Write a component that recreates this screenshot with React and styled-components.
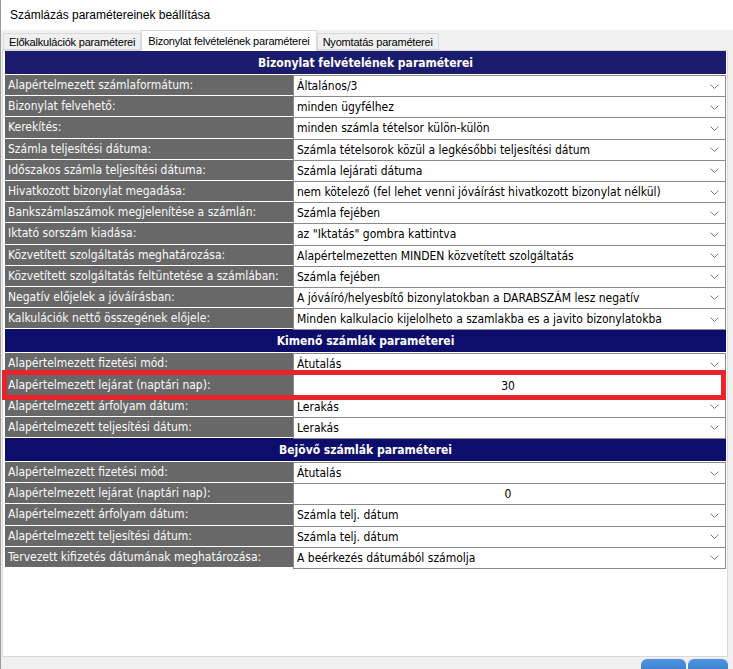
import React from 'react';
import styled, { createGlobalStyle } from 'styled-components';

const GlobalStyle = createGlobalStyle`
  html, body {
    margin: 0;
    padding: 0;
    background: #fff;
  }
  body {
    font-family: "Liberation Sans", Arial, sans-serif;
  }
`;

const Window = styled.div`
  width: 733px;
  height: 669px;
  box-sizing: border-box;
  display: flex;
  flex-direction: column;
  border-left: 1px solid #9a9a9a;
  background: #f0f0f0;
  overflow: hidden;
`;

const TitleBar = styled.div`
  height: 30px;
  flex: none;
  display: flex;
  align-items: center;
  padding-left: 9px;
  background: #fff;
  font-family: "Liberation Sans", Arial, sans-serif;
  font-size: 12px;
  color: #000;
`;

const Body = styled.div`
  flex: 1;
  display: flex;
  flex-direction: column;
  padding: 0 5px 0 1px;
`;

const TabStrip = styled.div`
  height: 20px;
  flex: none;
  display: flex;
  align-items: flex-end;
  padding-left: 1px;
`;

const Tab = styled.div`
  box-sizing: border-box;
  height: ${(p) => (p.$active ? '21px' : '17px')};
  margin-bottom: ${(p) => (p.$active ? '-1px' : '0')};
  padding: ${(p) => (p.$active ? '0 6px' : '0 5px')};
  display: flex;
  align-items: center;
  border: 1px solid #d9d9d9;
  border-bottom: ${(p) => (p.$active ? 'none' : '1px solid #d9d9d9')};
  background: ${(p) => (p.$active ? '#fff' : '#f0f0f0')};
  position: relative;
  z-index: ${(p) => (p.$active ? 2 : 1)};
  font-family: "Liberation Sans", Arial, sans-serif;
  font-size: 11px;
  letter-spacing: -0.2px;
  color: #000;
  white-space: nowrap;
`;

const Panel = styled.div`
  height: 607px;
  flex: none;
  box-sizing: border-box;
  background: #fff;
  border: 1px solid #d9d9d9;
  padding: 0 1px 0 2px;
`;

const Table = styled.div`
  display: flex;
  flex-direction: column;
  font-family: "DejaVu Sans Condensed", "DejaVu Sans", sans-serif;
  font-stretch: condensed;
  font-size: 12px;
`;

const Header = styled.div`
  height: 23px;
  margin-bottom: 1px;
  display: flex;
  align-items: center;
  justify-content: center;
  background: ${(p) => p.$tone};
  color: #fff;
  font-weight: bold;
`;

const Row = styled.div`
  position: relative;
  height: 21.2px;
  display: grid;
  grid-template-columns: 288px 1fr;
`;

const Label = styled.div`
  box-sizing: border-box;
  height: 100%;
  padding-left: 3px;
  display: flex;
  align-items: center;
  background: #686868;
  color: #fafafa;
  border-bottom: 1px solid #fff;
  white-space: nowrap;
`;

const Value = styled.div`
  box-sizing: border-box;
  height: calc(100% + 1px);
  padding: 0 6px 0 3px;
  display: flex;
  align-items: center;
  justify-content: ${(p) => (p.$center ? 'center' : 'space-between')};
  background: #fff;
  border: 1px solid #8a8a8a;
  color: #000;
  white-space: nowrap;
  position: relative;
  z-index: ${(p) => (p.$first ? 0 : 1)};
`;

const Chevron = styled.svg`
  flex: none;
  width: 9px;
  height: 5px;
`;

const Highlight = styled.div`
  position: absolute;
  left: -3px;
  right: 0;
  top: -4px;
  bottom: -4px;
  border: 5px solid #e8232b;
  pointer-events: none;
  z-index: 5;
`;

const Footer = styled.div`
  flex: 1;
  display: flex;
  justify-content: flex-end;
  align-items: flex-start;
  gap: 2px;
  padding-top: 2px;
`;

const FooterButton = styled.div`
  width: ${(p) => p.$w}px;
  height: 22px;
  border-radius: 6px;
  background: linear-gradient(#4d94df, #2f72c4);
`;

const sections = [
  {
    title: 'Bizonylat felvételének paraméterei',
    tone: '#1c1c6e',
    rows: [
      ['Alapértelmezett számlaformátum:', 'Általános/3'],
      ['Bizonylat felvehető:', 'minden ügyfélhez'],
      ['Kerekítés:', 'minden számla tételsor külön-külön'],
      ['Számla teljesítési dátuma:', 'Számla tételsorok közül a legkésőbbi teljesítési dátum'],
      ['Időszakos számla teljesítési dátuma:', 'Számla lejárati dátuma'],
      ['Hivatkozott bizonylat megadása:', 'nem kötelező (fel lehet venni jóváírást hivatkozott bizonylat nélkül)'],
      ['Bankszámlaszámok megjelenítése a számlán:', 'Számla fejében'],
      ['Iktató sorszám kiadása:', 'az "Iktatás" gombra kattintva'],
      ['Közvetített szolgáltatás meghatározása:', 'Alapértelmezetten MINDEN közvetített szolgáltatás'],
      ['Közvetített szolgáltatás feltüntetése a számlában:', 'Számla fejében'],
      ['Negatív előjelek a jóváírásban:', 'A jóváíró/helyesbítő bizonylatokban a DARABSZÁM lesz negatív'],
      ['Kalkulációk nettő összegének előjele:', 'Minden kalkulacio kijelolheto a szamlakba es a javito bizonylatokba'],
    ],
  },
  {
    title: 'Kimenő számlák paraméterei',
    tone: '#0d0d6b',
    rows: [
      ['Alapértelmezett fizetési mód:', 'Átutalás'],
      ['Alapértelmezett lejárat (naptári nap):', '30', 'number', true],
      ['Alapértelmezett árfolyam dátum:', 'Lerakás'],
      ['Alapértelmezett teljesítési dátum:', 'Lerakás'],
    ],
  },
  {
    title: 'Bejövő számlák paraméterei',
    tone: '#0d0d6b',
    rows: [
      ['Alapértelmezett fizetési mód:', 'Átutalás'],
      ['Alapértelmezett lejárat (naptári nap):', '0', 'number'],
      ['Alapértelmezett árfolyam dátum:', 'Számla telj. dátum'],
      ['Alapértelmezett teljesítési dátum:', 'Számla telj. dátum'],
      ['Tervezett kifizetés dátumának meghatározása:', 'A beérkezés dátumából számolja'],
    ],
  },
];

function DropArrow() {
  return (
    <Chevron viewBox="0 0 9 5">
      <polyline points="0.5,0.5 4.5,4.5 8.5,0.5" fill="none" stroke="#7a7a7a" strokeWidth="1" />
    </Chevron>
  );
}

export default function App() {
  return (
    <>
      <GlobalStyle />
      <Window>
        <TitleBar>Számlázás paramétereinek beállítása</TitleBar>
        <Body>
          <TabStrip>
            <Tab>Előkalkulációk paraméterei</Tab>
            <Tab $active>Bizonylat felvételének paraméterei</Tab>
            <Tab>Nyomtatás paraméterei</Tab>
          </TabStrip>
          <Panel>
            <Table>
              {sections.map((s) => (
                <React.Fragment key={s.title}>
                  <Header $tone={s.tone}>{s.title}</Header>
                  {s.rows.map(([label, value, kind, marked], i) => (
                    <Row key={label}>
                      <Label>{label}</Label>
                      <Value $center={kind === 'number'} $first={i === 0}>
                        <span>{value}</span>
                        {kind !== 'number' && <DropArrow />}
                      </Value>
                      {marked && <Highlight />}
                    </Row>
                  ))}
                </React.Fragment>
              ))}
            </Table>
          </Panel>
          <Footer>
            <FooterButton $w={45} />
            <FooterButton $w={40} />
          </Footer>
        </Body>
      </Window>
    </>
  );
}
